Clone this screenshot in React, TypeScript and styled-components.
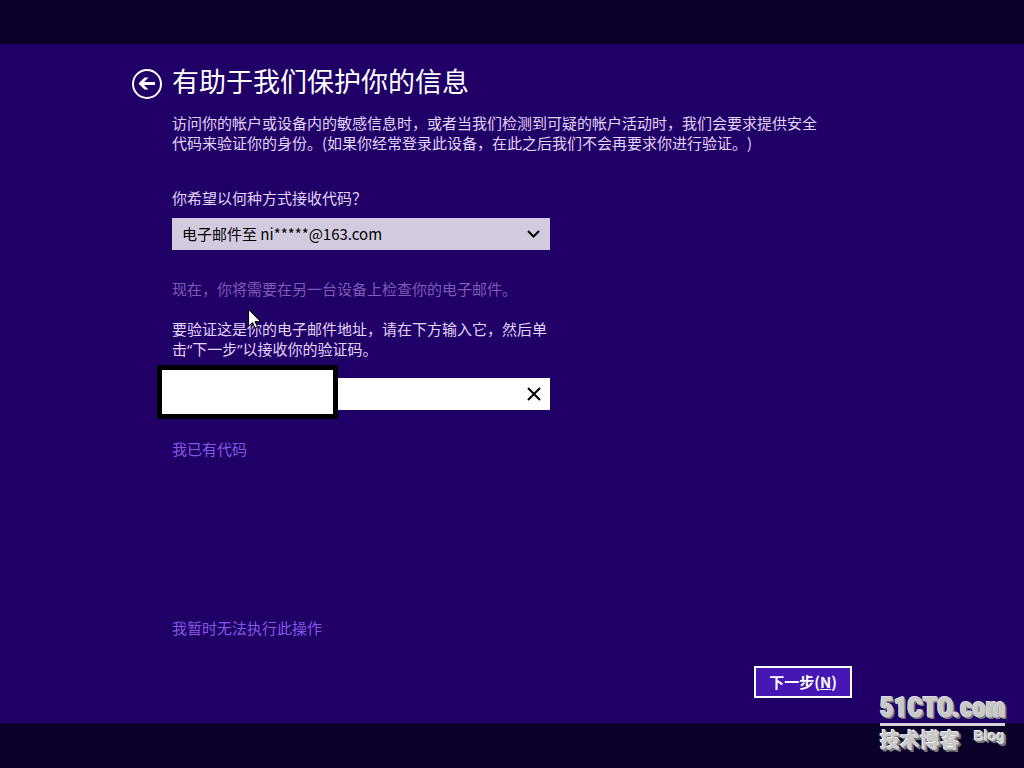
import React, { useState } from "react";
import styled, { createGlobalStyle } from "styled-components";

const GlobalStyle = createGlobalStyle`
  * { box-sizing: border-box; }
  body {
    margin: 0;
    background: #0b0029;
    color: #e2d4fa;
    font-family: "Noto Sans CJK SC", sans-serif;
    font-size: 15px;
    font-weight: 400;
    line-height: 20px;
    text-spacing-trim: space-all;
  }
`;

const Screen = styled.div`
  position: relative;
  min-height: 100vh;
  padding: 44px 0 45px;
  display: flex;
  flex-direction: column;
`;

const Panel = styled.main`
  flex: 1;
  display: flex;
  flex-direction: column;
  padding: 16px 172px 25px 132px;
  background: #200067;
`;

const Header = styled.header`
  display: flex;
  align-items: flex-start;
  gap: 10px;
  height: 45px;
`;

const BackButton = styled.button`
  display: block;
  width: 30px;
  height: 30px;
  margin-top: 9px;
  padding: 0;
  border: 0;
  background: none;
  color: #ffffff;
`;

const Title = styled.h1`
  margin: 0;
  color: #ffffff;
  font-size: 27px;
  font-weight: 400;
  line-height: 42px;
`;

const Form = styled.form`
  flex: 1;
  display: flex;
  flex-direction: column;
  padding: 8px 0 0 40px;
`;

const Text = styled.p<{ $muted?: boolean }>`
  max-width: 650px;
  margin: 0;
  color: ${(p) => (p.$muted ? "#7e5cb4" : "inherit")};
`;

const Fields = styled.div`
  display: flex;
  flex-direction: column;
  max-width: 378px;
  margin-top: 35px;
`;

const Label = styled.label<{ $spaced?: boolean }>`
  margin-top: ${(p) => (p.$spaced ? "20px" : "0")};
  margin-bottom: ${(p) => (p.$spaced ? "19px" : "10px")};
  font-family: "Open Sans", "Noto Sans CJK SC", sans-serif;
`;

const Control = styled.div`
  position: relative;
  display: flex;
  margin-bottom: 29px;
`;

const Select = styled.select`
  flex: 1;
  height: 32px;
  padding: 0 36px 0 10px;
  border: 0;
  border-radius: 0;
  appearance: none;
  background: #d2cbe0;
  color: #000000;
  font: inherit;
`;

const Chevron = styled.svg`
  position: absolute;
  top: 11px;
  right: 10px;
  pointer-events: none;
`;

const Input = styled.input`
  flex: 1;
  min-width: 0;
  height: 32px;
  padding: 0 8px;
  border: 0;
  border-radius: 0;
  outline: 0;
  background: #ffffff;
  color: #000000;
  font: inherit;
`;

const ClearButton = styled.button`
  display: grid;
  place-items: center;
  width: 32px;
  height: 32px;
  padding: 0;
  border: 0;
  background: #ffffff;
  color: #000000;
`;

const Cover = styled.div`
  position: absolute;
  top: -13px;
  left: -15px;
  width: 181px;
  height: 54px;
  border: 5px solid #000000;
  background: #ffffff;
`;

const Link = styled.a`
  align-self: flex-start;
  color: #8259e0;
  text-decoration: none;
`;

const Footer = styled.div`
  display: flex;
  flex-direction: column;
  gap: 28px;
  margin-top: auto;
`;

const NextButton = styled.button`
  align-self: flex-end;
  width: 98px;
  height: 32px;
  padding: 0;
  border: 2px solid #ffffff;
  background: #4617b4;
  color: #ffffff;
  font: inherit;
  font-weight: 700;
`;

const Pointer = styled.svg`
  position: absolute;
  top: 309px;
  left: 248px;
  pointer-events: none;
`;

const Watermark = styled.div`
  position: absolute;
  right: 19px;
  bottom: 14px;
  width: 125px;
  color: #c9c9c9;
  text-shadow: -1px -1px 0 #f4f4f4, 1px 1px 0 #77777d, 2px 2px 0 #77777d;
  font-weight: 900;
`;

const Site = styled.div`
  border-bottom: 3px solid #d4d4d8;
  font-family: "Roboto Condensed", "Open Sans Condensed", Roboto, sans-serif;
  font-size: 27px;
  font-weight: 900;
  line-height: 30px;
  white-space: nowrap;
  -webkit-text-stroke: 1px #c9c9c9;
`;

const Tagline = styled.div`
  display: flex;
  justify-content: space-between;
  font-size: 20px;
  line-height: 28px;
`;

const Blog = styled.span`
  font-family: "Liberation Sans", sans-serif;
  font-size: 14px;
  font-weight: 700;
  line-height: 20px;
`;

export default function App() {
  const [email, setEmail] = useState("");

  return (
    <>
      <GlobalStyle />
      <Screen>
        <Panel>
          <Header>
            <BackButton type="button" aria-label="返回">
              <svg width="30" height="30" viewBox="0 0 30 30" fill="none" stroke="currentColor">
                <circle cx="15" cy="15" r="14" strokeWidth="2" />
                <path d="M23 14.5H9" strokeWidth="3" />
                <path d="M6.5 14.5L12.5 8.5H16.5L10.5 14.5L16.5 20.5H12.5Z" fill="currentColor" stroke="none" />
              </svg>
            </BackButton>
            <Title>有助于我们保护你的信息</Title>
          </Header>
          <Form onSubmit={(e) => e.preventDefault()}>
            <Text>
              访问你的帐户或设备内的敏感信息时，或者当我们检测到可疑的帐户活动时，我们会要求提供安全代码来验证你的身份。(如果你经常登录此设备，在此之后我们不会再要求你进行验证。)
            </Text>
            <Fields>
              <Label htmlFor="method">你希望以何种方式接收代码？</Label>
              <Control>
                <Select id="method">
                  <option>电子邮件至 ni*****@163.com</option>
                </Select>
                <Chevron width="13" height="10" viewBox="0 0 13 10" fill="none" stroke="#000000" strokeWidth="2">
                  <path d="M1 2L6.5 7.5L12 2" />
                </Chevron>
              </Control>
              <Text $muted>现在，你将需要在另一台设备上检查你的电子邮件。</Text>
              <Label htmlFor="email" $spaced>
                要验证这是你的电子邮件地址，请在下方输入它，然后单击“下一步”以接收你的验证码。
              </Label>
              <Control>
                <Input id="email" type="text" value={email} onChange={(e) => setEmail(e.target.value)} />
                <ClearButton type="button" aria-label="清除" onClick={() => setEmail("")}>
                  <svg width="14" height="14" viewBox="0 0 14 14" stroke="currentColor" strokeWidth="2">
                    <path d="M1 1L13 13M13 1L1 13" />
                  </svg>
                </ClearButton>
                <Cover />
              </Control>
              <Link href="#code">我已有代码</Link>
            </Fields>
            <Footer>
              <Link href="#later">我暂时无法执行此操作</Link>
              <NextButton type="submit">
                下一步(<u>N</u>)
              </NextButton>
            </Footer>
          </Form>
        </Panel>
        <Watermark>
          <Site>51CTO.com</Site>
          <Tagline>
            技术博客 <Blog>Blog</Blog>
          </Tagline>
        </Watermark>
        <Pointer width="13" height="20" viewBox="0 0 13 20">
          <path d="M0.5 0.5V17L4.5 13.5L7 19L9.5 18L7 12.5H12.5Z" fill="#ffffff" stroke="#000000" />
        </Pointer>
      </Screen>
    </>
  );
}
